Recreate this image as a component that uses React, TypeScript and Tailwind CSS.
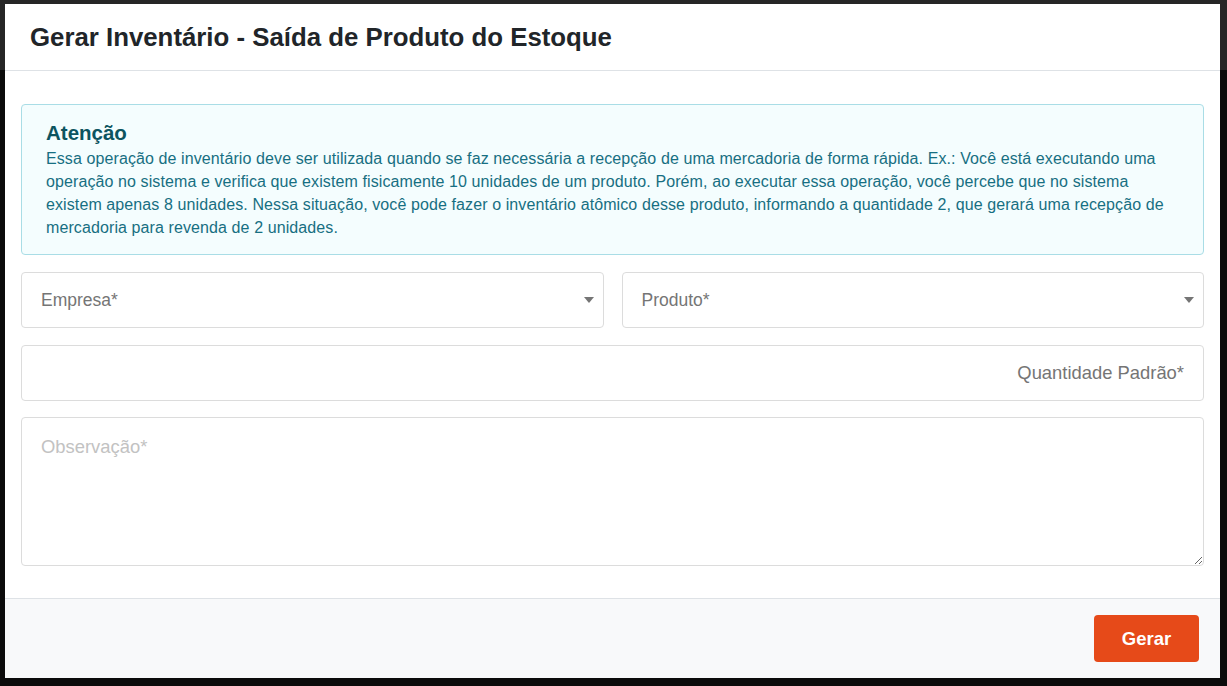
import React from 'react';

const Caret = () => (
  <svg width="10" height="6" viewBox="0 0 10 6" className="absolute right-[9px] top-1/2 -translate-y-1/2">
    <path d="M0 0 L10 0 L5 6 Z" fill="#757575" />
  </svg>
);

function SelectField({ label }: { label: string }) {
  return (
    <div className="relative flex-1 h-[56px] border border-[#dcdcdc] rounded-[4px] bg-white flex items-center px-[19px]">
      <span className="text-[17.5px] text-[#757575]">{label}</span>
      <Caret />
    </div>
  );
}

export default function App() {
  return (
    <div
      className="w-[1227px] h-[686px] bg-[#0b0b0b] relative overflow-hidden"
      style={{ fontFamily: '"Liberation Sans", Arial, sans-serif' }}
    >
      <div className="absolute inset-x-0 top-0 h-[70px] bg-[#262626]" />
      <div className="absolute left-[5px] top-[4px] w-[1215px] h-[674px] bg-white flex flex-col">
        {/* header */}
        <div className="h-[67px] shrink-0 border-b border-[#dee2e6] flex items-center px-[25px]">
          <h2 className="text-[25.8px] font-bold text-[#212529]">
            Gerar Inventário - Saída de Produto do Estoque
          </h2>
        </div>

        {/* body */}
        <div className="h-[527px] shrink-0 px-4 pt-[33px] flex flex-col">
          <div className="border border-[#a9dde6] bg-[#f4fdfe] rounded-[4px] px-[24px] pt-[16px] pb-[15px]">
            <h3 className="text-[20.5px] font-bold text-[#0c5460] leading-[24px] mb-[2px]">Atenção</h3>
            <p className="text-[16px] leading-[23px] text-[#176f82] tracking-[0.1px]">
              Essa operação de inventário deve ser utilizada quando se faz necessária a recepção de uma mercadoria de forma rápida. Ex.: Você está executando uma operação no sistema e verifica que existem fisicamente 10 unidades de um produto. Porém, ao executar essa operação, você percebe que no sistema existem apenas 8 unidades. Nessa situação, você pode fazer o inventário atômico desse produto, informando a quantidade 2, que gerará uma recepção de mercadoria para revenda de 2 unidades.
            </p>
          </div>

          <div className="flex gap-[18px] mt-[17px]">
            <SelectField label="Empresa*" />
            <SelectField label="Produto*" />
          </div>

          <div className="h-[56px] mt-[17px] border border-[#dcdcdc] rounded-[4px] flex items-center justify-end px-[19px]">
            <span className="text-[18.4px] text-[#757575]">Quantidade Padrão*</span>
          </div>

          <textarea
            placeholder="Observação*"
            className="h-[149px] mt-[16px] w-full border border-[#dcdcdc] rounded-[4px] px-[19px] pt-[15px] text-[18.4px] text-[#333] placeholder:text-[#c2c2c2] outline-none"
            style={{ fontFamily: '"Liberation Sans", Arial, sans-serif' }}
          />
        </div>

        {/* footer */}
        <div className="h-[80px] shrink-0 border-t border-[#dee2e6] bg-[#f8f9fa] flex items-center justify-end px-[21px]">
          <button className="w-[105px] h-[47px] bg-[#e64a19] text-white font-bold text-[18.5px] rounded-[4px]">
            Gerar
          </button>
        </div>
      </div>
    </div>
  );
}
